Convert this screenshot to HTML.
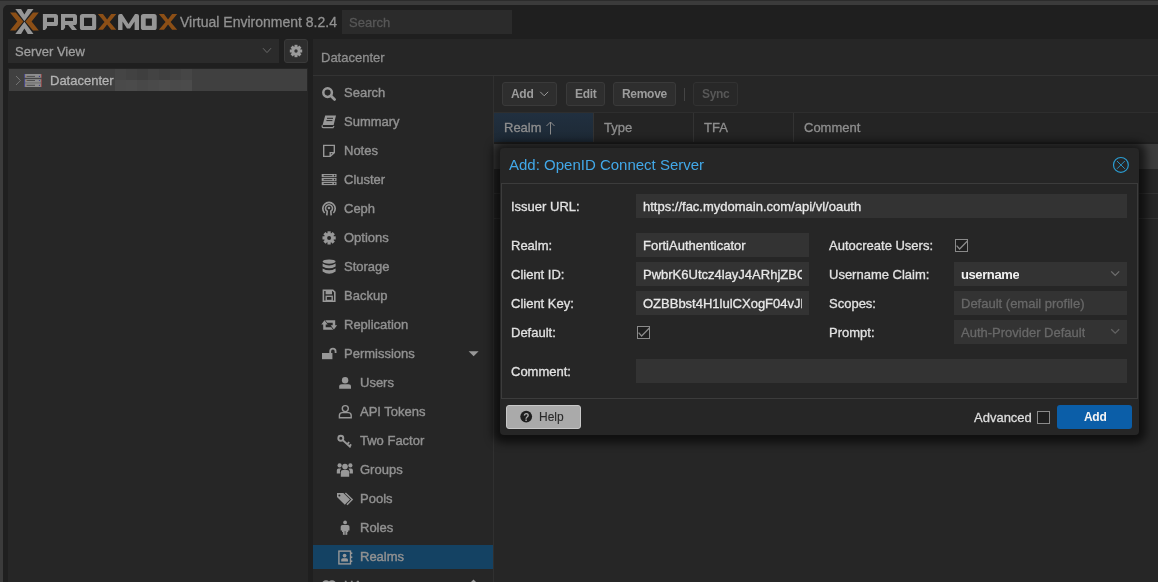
<!DOCTYPE html>
<html><head><meta charset="utf-8">
<style>
*{box-sizing:border-box;margin:0;padding:0}
html,body{width:1158px;height:582px;overflow:hidden;background:#3b3b3b;font-family:"Liberation Sans",sans-serif;font-size:13px}
.a{position:absolute}
.t,.lbl,.ftxt{will-change:transform}
#topline{left:0;top:0;width:1158px;height:1px;background:#2c2c2c}
#app{left:3px;top:5px;width:1155px;height:577px;background:#1f1f1f;border-top-left-radius:5px}
.t{position:absolute;white-space:pre;line-height:16px;-webkit-text-stroke:0.3px currentColor}
.nav{color:#919191;-webkit-text-stroke:0.4px #919191}
.fld{position:absolute;background:#333;height:24px}
.lbl{position:absolute;color:#e2e2e2;-webkit-text-stroke:0.3px currentColor;white-space:pre;line-height:16px}
.ftxt{position:absolute;color:#e8e8e8;-webkit-text-stroke:0.3px currentColor;white-space:pre;line-height:16px;overflow:hidden}
.btn{position:absolute;background:#2e2e2e;border:1px solid #3a3a3a;border-radius:3px;height:24px}
.cb{position:absolute;width:13px;height:13px;border:1px solid #8a8a8a;background:#1e1e1e}
</style></head><body>
<div class="a" id="topline"></div>
<div class="a" id="app"></div>

<!-- header -->
<svg class="a" style="left:0;top:0" width="190" height="40" viewBox="0 0 190 40">
  <g fill="#8c4f16">
    <polygon points="10,12.4 15.8,12.4 23.4,21.5 15.8,30.6 10,30.6 17.2,21.5"/>
    <polygon points="38.8,12.4 33,12.4 25.4,21.5 33,30.6 38.8,30.6 31.6,21.5"/>
  </g>
  <g fill="#969696">
    <polygon points="15.3,9 21.1,9 24.4,14.6 27.7,9 33.5,9 24.4,21.2"/>
    <polygon points="15.3,34 21.1,34 24.4,28.4 27.7,34 33.5,34 24.4,21.8"/>
  </g>
  <g fill="#969696" fill-rule="evenodd">
    <path d="M42.9,14 H55.4 Q58,14 58,16.6 V23.4 Q58,26 55.4,26 H47 V27.8 L45,30 H42.9 Z M47,17.8 H54 V22 H47 Z"/>
    <path d="M61,14 H74.4 Q77,14 77,16.6 V22.4 Q77,25 74.4,25 H73 L77,30 H72 L68.2,25 H65.1 V27.8 L63.2,30 H61 Z M65.1,17.8 H73 V21 H65.1 Z"/>
    <path d="M82.5,14 H93.6 Q96.2,14 96.2,16.6 V27.4 Q96.2,30 93.6,30 H82.5 Q79.9,30 79.9,27.4 V16.6 Q79.9,14 82.5,14 Z M84,17.8 H92.1 V26 H84 Z"/>
    <path d="M118.1,30 V16 Q118.1,14 120.1,14 H122 L128.5,24 L135,14 H137 Q139,14 139,16 V30 H134.6 V21.5 L130,28.6 H127 L122.5,21.5 V30 Z"/>
    <path d="M143.5,14 H154.1 Q156.7,14 156.7,16.6 V27.4 Q156.7,30 154.1,30 H143.5 Q140.9,30 140.9,27.4 V16.6 Q140.9,14 143.5,14 Z M145.7,18.6 H151.9 V25.8 H145.7 Z"/>
  </g>
  <g fill="#8c4f16">
    <path d="M97.9,14 H103 L107.1,19.4 L111.2,14 H116.3 L109.7,21.9 L116.3,29.8 H111.2 L107.1,24.4 L103,29.8 H97.9 L104.5,21.9 Z"/>
    <path d="M158.9,14 H164 L168.05,19.4 L172.1,14 H177.2 L170.6,21.9 L177.2,29.8 H172.1 L168.05,24.4 L164,29.8 H158.9 L165.5,21.9 Z"/>
  </g>
</svg>

<div class="t" style="left:180px;top:14px;font-size:14px;color:#919191">Virtual Environment 8.2.4</div>
<div class="a" style="left:342px;top:10px;width:170px;height:24px;background:#2b2b2b"></div>
<div class="t" style="left:349px;top:15px;color:#575757">Search</div>

<!-- left tree -->
<div class="a" style="left:8px;top:39px;width:271px;height:24px;background:#2b2b2b"></div>
<div class="t" style="left:15px;top:44px;color:#9e9e9e">Server View</div>
<div class="btn" style="left:284px;top:39px;width:24px;"></div>
<div class="a" style="left:8px;top:68px;width:300px;height:514px;background:#262626"></div>
<div class="a" style="left:9px;top:69px;width:298px;height:22px;background:#404040"></div>
<div class="t" style="left:50px;top:73px;color:#b4b4b4">Datacenter</div>
<div class="a" style="left:115px;top:69px;width:11px;height:11px;background:#454545"></div>
<div class="a" style="left:126px;top:69px;width:11px;height:11px;background:#424242"></div>
<div class="a" style="left:137px;top:69px;width:11px;height:11px;background:#3f3f3f"></div>
<div class="a" style="left:148px;top:69px;width:11px;height:11px;background:#434343"></div>
<div class="a" style="left:159px;top:69px;width:11px;height:11px;background:#404040"></div>
<div class="a" style="left:170px;top:69px;width:11px;height:11px;background:#434343"></div>
<div class="a" style="left:181px;top:69px;width:11px;height:11px;background:#464646"></div>
<div class="a" style="left:115px;top:80px;width:11px;height:11px;background:#4a4a4a"></div>
<div class="a" style="left:126px;top:80px;width:11px;height:11px;background:#4b4b4b"></div>
<div class="a" style="left:137px;top:80px;width:11px;height:11px;background:#484848"></div>
<div class="a" style="left:148px;top:80px;width:11px;height:11px;background:#4a4a4a"></div>
<div class="a" style="left:159px;top:80px;width:11px;height:11px;background:#4c4c4c"></div>
<div class="a" style="left:170px;top:80px;width:11px;height:11px;background:#4a4a4a"></div>
<div class="a" style="left:181px;top:80px;width:11px;height:11px;background:#4b4b4b"></div>


<!-- content panel -->
<div class="a" style="left:313px;top:39px;width:845px;height:543px;background:#262626"></div>
<div class="a" style="left:313px;top:75px;width:845px;height:1px;background:#333"></div>
<div class="t" style="left:321px;top:50px;color:#8f8f8f">Datacenter</div>
<div class="a" style="left:493px;top:76px;width:1px;height:506px;background:#303030"></div>

<!-- nav -->
<div class="t nav" style="left:344px;top:85px">Search</div>
<div class="t nav" style="left:344px;top:114px">Summary</div>
<div class="t nav" style="left:344px;top:143px">Notes</div>
<div class="t nav" style="left:344px;top:172px">Cluster</div>
<div class="t nav" style="left:344px;top:201px">Ceph</div>
<div class="t nav" style="left:344px;top:230px">Options</div>
<div class="t nav" style="left:344px;top:259px">Storage</div>
<div class="t nav" style="left:344px;top:288px">Backup</div>
<div class="t nav" style="left:344px;top:317px">Replication</div>
<div class="t nav" style="left:344px;top:346px">Permissions</div>
<div class="t nav" style="left:360px;top:375px">Users</div>
<div class="t nav" style="left:360px;top:404px">API Tokens</div>
<div class="t nav" style="left:360px;top:433px">Two Factor</div>
<div class="t nav" style="left:360px;top:462px">Groups</div>
<div class="t nav" style="left:360px;top:491px">Pools</div>
<div class="t nav" style="left:360px;top:520px">Roles</div>
<div class="a" style="left:313px;top:545px;width:180px;height:24px;background:#144263"></div>
<div class="t nav" style="left:360px;top:549px">Realms</div>
<div class="t nav" style="left:344px;top:578px">HA</div>

<!-- toolbar -->
<div class="btn" style="left:502px;top:82px;width:55px"></div>
<div class="t" style="left:511px;top:86px;font-size:12px;font-weight:bold;color:#9c9c9c;-webkit-text-stroke:0;letter-spacing:-0.3px">Add</div>
<div class="btn" style="left:566px;top:82px;width:39px"></div>
<div class="t" style="left:575px;top:86px;font-size:12px;font-weight:bold;color:#9c9c9c;-webkit-text-stroke:0;letter-spacing:-0.3px">Edit</div>
<div class="btn" style="left:613px;top:82px;width:63px"></div>
<div class="t" style="left:622px;top:86px;font-size:12px;font-weight:bold;color:#9c9c9c;-webkit-text-stroke:0;letter-spacing:-0.3px">Remove</div>
<div class="a" style="left:684px;top:88px;width:1px;height:13px;background:#444"></div>
<div class="btn" style="left:693px;top:82px;width:45px;background:#282828;border-color:#323232"></div>
<div class="t" style="left:702px;top:86px;font-size:12px;font-weight:bold;color:#575757;-webkit-text-stroke:0;letter-spacing:-0.3px">Sync</div>

<!-- grid header -->
<div class="a" style="left:494px;top:112px;width:664px;height:30px;background:#242424"></div>
<div class="a" style="left:494px;top:112px;width:100px;height:30px;background:linear-gradient(#213040,#1d2935)"></div>
<div class="t" style="left:504px;top:120px;color:#8e8e8e">Realm</div>
<div class="t" style="left:604px;top:120px;color:#8e8e8e">Type</div>
<div class="t" style="left:704px;top:120px;color:#8e8e8e">TFA</div>
<div class="t" style="left:804px;top:120px;color:#8e8e8e">Comment</div>
<div class="a" style="left:593px;top:112px;width:1px;height:30px;background:#333"></div>
<div class="a" style="left:693px;top:112px;width:1px;height:30px;background:#333"></div>
<div class="a" style="left:793px;top:112px;width:1px;height:30px;background:#333"></div>

<!-- grid rows -->
<div class="a" style="left:494px;top:142px;width:664px;height:2px;background:#202020"></div>
<div class="a" style="left:494px;top:144px;width:664px;height:25px;background:#3c3c3c"></div>
<div class="a" style="left:494px;top:112px;width:664px;height:1px;background:#2e2e2e"></div>
<div class="a" style="left:494px;top:193px;width:664px;height:1px;background:#333"></div>
<div class="a" style="left:494px;top:218px;width:664px;height:1px;background:#333"></div>
<!-- dialog -->
<div class="a" style="left:500px;top:148px;width:639px;height:287px;background:#262626;border-radius:4px;box-shadow:0 1px 8px 7px rgba(0,0,0,.6)"></div>
<div class="t" style="left:509px;top:156px;font-size:15px;-webkit-text-stroke:0;color:#42a8e8;line-height:18px">Add: OpenID Connect Server</div>
<div class="a" style="left:501px;top:183px;width:637px;height:216px;border:1px solid #3c3c3c;background:#262626"></div>

<div class="lbl" style="left:511px;top:199px">Issuer URL:</div>
<div class="fld" style="left:636px;top:194px;width:491px"></div>
<div class="ftxt" style="left:643px;top:199px;width:470px">https://fac.mydomain.com/api/vl/oauth</div>

<div class="lbl" style="left:511px;top:238px">Realm:</div>
<div class="fld" style="left:636px;top:233px;width:173px"></div>
<div class="ftxt" style="left:643px;top:238px;width:159px">FortiAuthenticator</div>
<div class="lbl" style="left:511px;top:267px">Client ID:</div>
<div class="fld" style="left:636px;top:262px;width:173px"></div>
<div class="ftxt" style="left:643px;top:267px;width:159px">PwbrK6Utcz4layJ4ARhjZBC</div>
<div class="lbl" style="left:511px;top:296px">Client Key:</div>
<div class="fld" style="left:636px;top:291px;width:173px"></div>
<div class="ftxt" style="left:643px;top:296px;width:159px">OZBBbst4H1lulCXogF04vJl</div>
<div class="lbl" style="left:511px;top:325px">Default:</div>
<div class="cb" style="left:637px;top:326px"></div>

<div class="lbl" style="left:829px;top:238px">Autocreate Users:</div>
<div class="cb" style="left:955px;top:239px"></div>
<div class="lbl" style="left:829px;top:267px">Username Claim:</div>
<div class="fld" style="left:954px;top:262px;width:173px"></div>
<div class="ftxt" style="left:961px;top:267px;font-weight:bold;color:#f2f2f2;-webkit-text-stroke:0;letter-spacing:-0.4px">username</div>
<div class="lbl" style="left:829px;top:296px">Scopes:</div>
<div class="fld" style="left:954px;top:291px;width:173px"></div>
<div class="ftxt" style="left:961px;top:296px;color:#686868">Default (email profile)</div>
<div class="lbl" style="left:829px;top:325px">Prompt:</div>
<div class="fld" style="left:954px;top:320px;width:173px"></div>
<div class="ftxt" style="left:961px;top:325px;color:#686868">Auth-Provider Default</div>

<div class="lbl" style="left:511px;top:364px">Comment:</div>
<div class="fld" style="left:636px;top:359px;width:491px"></div>

<!-- footer -->
<div class="a" style="left:506px;top:405px;width:75px;height:24px;background:#aaa;border:1px solid #c8c8c8;border-radius:3px"></div>
<div class="t" style="left:539px;top:409px;font-size:12px;color:#2a2a2a;-webkit-text-stroke:0.1px #2a2a2a">Help</div>
<div class="lbl" style="left:974px;top:410px;color:#dcdcdc">Advanced</div>
<div class="cb" style="left:1037px;top:411px"></div>
<div class="a" style="left:1057px;top:405px;width:75px;height:24px;background:#0b5ea8;border-radius:3px"></div>
<div class="t" style="left:1084px;top:409px;font-size:12px;font-weight:bold;color:#f4f4f4;-webkit-text-stroke:0;letter-spacing:-0.3px">Add</div>

<svg class="a" style="left:0;top:0" width="1158" height="582" viewBox="0 0 1158 582">
<g fill="#989898" stroke="none">
  <!-- search -->
  <circle cx="327.6" cy="92.6" r="4.3" fill="none" stroke="#989898" stroke-width="2.5"/>
  <line x1="330.8" y1="95.8" x2="334.6" y2="99.4" stroke="#989898" stroke-width="2.8" stroke-linecap="round"/>
  <!-- book -->
  <path d="M325.2,115.5 H336 L333.6,125 H322.6 Z"/>
  <path d="M322.4,125.3 Q321.6,127.6 323.4,127.6 H333 L334,126" fill="none" stroke="#989898" stroke-width="1.2"/>
  <line x1="327" y1="118.3" x2="333" y2="118.3" stroke="#262626" stroke-width="1"/>
  <line x1="326.4" y1="120.6" x2="332.4" y2="120.6" stroke="#262626" stroke-width="1"/>
  <!-- notes -->
  <path d="M323.7,145.4 H334.3 V152.6 L330.2,156.4 H323.7 Z M330.2,156.4 V152.6 H334.3" fill="none" stroke="#989898" stroke-width="1.4"/>
  <!-- cluster -->
  <rect x="321.7" y="174" width="14.8" height="3.2"/>
  <rect x="321.7" y="178" width="14.8" height="3.2"/>
  <rect x="321.7" y="181.9" width="14.8" height="3.2"/>
  <g stroke="#262626" stroke-width="0.9">
    <line x1="323.6" y1="175.6" x2="332.4" y2="175.6"/><line x1="323.6" y1="179.6" x2="332.4" y2="179.6"/><line x1="323.6" y1="183.5" x2="332.4" y2="183.5"/>
  </g>
  <g fill="#262626"><circle cx="334.6" cy="175.6" r="0.8"/><circle cx="334.6" cy="179.6" r="0.8"/><circle cx="334.6" cy="183.5" r="0.8"/></g>
  <!-- ceph -->
  <path d="M324.6,213 A6.2,6.2 0 1 1 333.4,213" fill="none" stroke="#989898" stroke-width="1.7"/>
  <path d="M326.8,215.3 L327.2,211.2 A3.5,3.5 0 1 1 330.8,211.2 L331.2,215.3" fill="none" stroke="#989898" stroke-width="1.6"/>
  <circle cx="329" cy="208" r="1.3"/>
  <!-- gear -->
  <g transform="translate(329.1,237.9)">
    <circle r="4.9"/>
    <rect x="-1.6" y="-6.6" width="3.2" height="13.2"/>
    <rect x="-1.6" y="-6.6" width="3.2" height="13.2" transform="rotate(45)"/>
    <rect x="-1.6" y="-6.6" width="3.2" height="13.2" transform="rotate(90)"/>
    <rect x="-1.6" y="-6.6" width="3.2" height="13.2" transform="rotate(135)"/>
    <circle r="2" fill="#262626"/>
  </g>
  <!-- storage -->
  <ellipse cx="329.1" cy="261.6" rx="6.5" ry="2.1"/>
  <path d="M322.6,263.6 Q329.1,267.4 335.6,263.6 V266.4 Q329.1,270.2 322.6,266.4 Z"/>
  <path d="M322.6,268.4 Q329.1,272.2 335.6,268.4 V271.6 Q329.1,276 322.6,271.6 Z"/>
  <!-- backup -->
  <path d="M323.4,290.2 H332.8 L334.8,292.2 V301.2 H323.4 Z" fill="none" stroke="#989898" stroke-width="1.6"/>
  <rect x="325.6" y="290" width="6.4" height="4.3"/>
  <rect x="326.2" y="296.3" width="6" height="4.2" fill="none" stroke="#989898" stroke-width="1.4"/>
  <!-- replication -->
  <path d="M321.3,324.6 L324.5,320.3 L327.7,324.6 H325.7 V327.2 H331.2 L333.2,329.8 H323.2 V324.6 Z"/>
  <path d="M337.1,325.2 L333.9,329.6 L330.7,325.2 H332.7 V322.8 H327.2 L325.2,320.2 H335.2 V325.2 Z"/>
  <!-- permissions (unlock) -->
  <rect x="322" y="353" width="10.4" height="6.2"/>
  <path d="M330.2,353.4 V351.4 A2.7,2.7 0 0 1 335.6,351.4 V353" fill="none" stroke="#989898" stroke-width="1.8"/>
  <!-- users -->
  <circle cx="345.1" cy="380.2" r="3.2"/>
  <path d="M339.2,388.8 V386.6 Q339.2,384.2 341.8,384.2 H348.4 Q351,384.2 351,386.6 V388.8 Z"/>
  <!-- api tokens -->
  <circle cx="345.3" cy="408.6" r="3" fill="none" stroke="#989898" stroke-width="1.4"/>
  <path d="M339.4,417.7 V415.6 Q339.4,412.6 342.4,412.6 H348.2 Q351.2,412.6 351.2,415.6 V417.7 Z" fill="none" stroke="#989898" stroke-width="1.4"/>
  <!-- two factor key -->
  <circle cx="340.8" cy="438.2" r="2.5" fill="none" stroke="#989898" stroke-width="1.9"/>
  <path d="M342.6,440 L350.6,447.4 M347.2,444.2 L349.2,442.2 M349.4,446.2 L351.2,444.4" fill="none" stroke="#989898" stroke-width="1.8"/>
  <!-- groups -->
  <circle cx="345" cy="466.6" r="2.8"/>
  <circle cx="339.6" cy="465.4" r="2.1"/>
  <circle cx="350.4" cy="465.4" r="2.1"/>
  <path d="M340.8,476.8 V472.2 Q340.8,470 343,470 H347 Q349.2,470 349.2,472.2 V476.8 Z"/>
  <path d="M336.8,473.4 V470.6 Q336.8,468.6 338.6,468.6 H341.2 L340,470.4 V473.4 Z"/>
  <path d="M352.9,473.4 V470.6 Q352.9,468.6 351.1,468.6 H348.5 L349.7,470.4 V473.4 Z"/>
  <!-- pools tags -->
  <path d="M337,493 H343.4 L350,499.6 L344.8,504.8 L337,497 Z"/>
  <circle cx="339.4" cy="495.4" r="1" fill="#262626"/>
  <path d="M345.4,493 L352.2,499.6 L347,504.8" fill="none" stroke="#989898" stroke-width="1.4"/>
  <!-- roles (male) -->
  <circle cx="345.1" cy="522.4" r="1.9"/>
  <path d="M340.7,530.6 V526.8 Q340.7,525 342.5,525 H347.7 Q349.5,525 349.5,526.8 V530.6 H348.2 V532 H342 V530.6 Z"/>
  <rect x="342.9" y="530" width="4.4" height="4.8"/>
  <line x1="345.1" y1="531" x2="345.1" y2="534.8" stroke="#262626" stroke-width="0.6"/>
  <!-- realms (address book) -->
  <rect x="338.9" y="551.1" width="11.6" height="12.8" fill="none" stroke="#989898" stroke-width="1.4"/>
  <circle cx="344.6" cy="555.6" r="1.9"/>
  <path d="M341.2,561.4 V559.8 Q341.2,558.2 342.8,558.2 H346.4 Q348,558.2 348,559.8 V561.4 Z"/>
  <rect x="351" y="552.4" width="1.3" height="1.6"/><rect x="351" y="556.4" width="1.3" height="1.6"/><rect x="351" y="560.4" width="1.3" height="1.6"/>
  <!-- HA partial -->
  <circle cx="326" cy="584.5" r="4.3"/><circle cx="332" cy="584.5" r="4.3"/>
  <!-- permissions triangle -->
  <path d="M468.6,351.3 H478.6 L473.6,356.2 Z"/>
  <path d="M471,582 L473.5,579.6 L476,582 Z"/>
</g>
<!-- tree expander & server icon -->
<path d="M16,76 L20.4,80.5 L16,85" fill="none" stroke="#7a7a7a" stroke-width="0.9"/>
<g>
  <rect x="24.2" y="74" width="17.6" height="3.9" fill="#8e8e8e"/>
  <rect x="24.2" y="79.1" width="17.6" height="7.9" fill="#8e8e8e"/>
  <rect x="25" y="82" width="16" height="1.7" fill="#7a7a7a"/>
  <rect x="24.2" y="74" width="0.9" height="13" fill="#3c3c8c"/>
  <rect x="40.9" y="74" width="0.9" height="13" fill="#8c3c3c"/>
  <rect x="24.2" y="77.9" width="17.6" height="1.2" fill="#474747"/>
  <g stroke="#4e4e4e" stroke-width="1"><line x1="26.8" y1="76.4" x2="35" y2="76.4"/><line x1="26.8" y1="80.5" x2="35" y2="80.5"/><line x1="26.8" y1="85.3" x2="35" y2="85.3"/></g>
  <g fill="#9a6a3a"><rect x="26.3" y="75.9" width="0.8" height="1"/><rect x="26.3" y="80" width="0.8" height="1"/><rect x="26.3" y="84.8" width="0.8" height="1"/></g>
  <g fill="#3a3a8a"><circle cx="39.4" cy="76.4" r="0.6"/><circle cx="39.4" cy="80.5" r="0.6"/><circle cx="39.4" cy="85.3" r="0.6"/></g>
</g>
<!-- combobox chevron -->
<path d="M263,48.2 L267,52.6 L271,48.2" fill="none" stroke="#6a6a6a" stroke-width="1"/>
<!-- gear button icon -->
<g transform="translate(296,51)" fill="#9a9a9a">
  <circle r="4.6"/>
  <rect x="-1.5" y="-6.2" width="3" height="12.4"/>
  <rect x="-1.5" y="-6.2" width="3" height="12.4" transform="rotate(45)"/>
  <rect x="-1.5" y="-6.2" width="3" height="12.4" transform="rotate(90)"/>
  <rect x="-1.5" y="-6.2" width="3" height="12.4" transform="rotate(135)"/>
  <circle r="1.7" fill="#333"/>
</g>
<!-- add button chevron -->
<path d="M540.2,91.8 L544.2,95.8 L548.2,91.8" fill="none" stroke="#9a9a9a" stroke-width="1"/>
<!-- sort arrow -->
<path d="M550.5,134.5 V122 M546.5,126 L550.5,122 L554.5,126" fill="none" stroke="#8a8a8a" stroke-width="1"/>
<!-- close tool -->
<circle cx="1120.9" cy="164.9" r="7.4" fill="none" stroke="#2b9dd2" stroke-width="1.2"/>
<path d="M1117,161 L1124.8,168.8 M1124.8,161 L1117,168.8" stroke="#2b9dd2" stroke-width="0.9"/>
<!-- checkmarks -->
<path d="M638.6,332.6 L641.6,336 L649.4,328" fill="none" stroke="#8a8a8a" stroke-width="1.3"/>
<path d="M956.6,245.6 L959.6,249 L967.4,241" fill="none" stroke="#8a8a8a" stroke-width="1.3"/>
<!-- combo chevrons in dialog -->
<path d="M1111.2,271.4 L1115.2,275.4 L1119.2,271.4" fill="none" stroke="#6e6e6e" stroke-width="1.3"/>
<path d="M1111.2,329.2 L1115.2,333.2 L1119.2,329.2" fill="none" stroke="#626262" stroke-width="1.3"/>
<!-- help icon -->
<circle cx="526.2" cy="416.6" r="5.9" fill="#1e1e1e"/>
<text x="526.2" y="420.6" font-family="Liberation Sans" font-weight="bold" font-size="10" fill="#aaa" text-anchor="middle">?</text>
</svg>

</body></html>
